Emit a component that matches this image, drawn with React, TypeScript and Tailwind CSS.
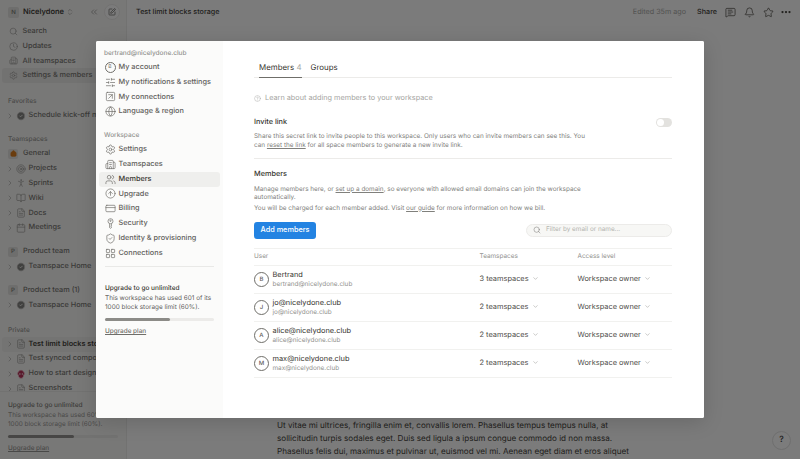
import {
  BookOpen,
  ChevronDown,
  ChevronRight,
  ChevronsLeft,
  ChevronsUpDown,
  CircleArrowUp,
  CircleHelp,
  Clock,
  CreditCard,
  FileText,
  Globe,
  Home,
  LayoutGrid,
  MessageSquareText,
  Bell,
  Star,
  Ellipsis,
  Search,
  Settings,
  SlidersHorizontal,
  SquareArrowUpRight,
  SquarePen,
  ShieldCheck,
  Target,
  Users,
  Building2,
  Calendar,
  PersonStanding,
  Skull,
  CircleCheck,
} from "lucide-react";

const font = "font-['Inter',sans-serif] [text-rendering:geometricPrecision] antialiased";

const VerticalKey = ({ size, strokeWidth, className }: { size: number; strokeWidth: number; className: string }) => (
  <svg width={size} height={size} viewBox="0 0 24 24" fill="none" stroke="currentColor" strokeWidth={strokeWidth} className={className}>
    <circle cx="12" cy="7" r="5.5" />
    <circle cx="12" cy="6" r="1.5" />
    <path d="M10 12.5V21l2 1.5 2-1.5v-2l-1.5-1 1.5-1v-4.5" />
  </svg>
);

const topItems = [
  { label: "Search", icon: Search },
  { label: "Updates", icon: Clock },
  { label: "All teamspaces", icon: Building2 },
];

const teamspaceItems = [
  { label: "Projects", icon: Target },
  { label: "Sprints", icon: PersonStanding },
  { label: "Wiki", icon: BookOpen },
  { label: "Docs", icon: FileText },
  { label: "Meetings", icon: Calendar },
];

const accountItems = [
  { label: "My notifications & settings", icon: SlidersHorizontal },
  { label: "My connections", icon: SquareArrowUpRight },
  { label: "Language & region", icon: Globe },
];

const workspaceItems = [
  { label: "Settings", icon: Settings },
  { label: "Teamspaces", icon: Building2 },
  { label: "Members", icon: Users, active: true },
  { label: "Upgrade", icon: CircleArrowUp },
  { label: "Billing", icon: CreditCard },
  { label: "Security", icon: VerticalKey },
  { label: "Identity & provisioning", icon: ShieldCheck },
  { label: "Connections", icon: LayoutGrid },
];

const members = [
  { initial: "B", name: "Bertrand", email: "bertrand@nicelydone.club", teamspaces: "3 teamspaces" },
  { initial: "J", name: "jo@nicelydone.club", email: "jo@nicelydone.club", teamspaces: "2 teamspaces" },
  { initial: "A", name: "alice@nicelydone.club", email: "alice@nicelydone.club", teamspaces: "2 teamspaces" },
  { initial: "M", name: "max@nicelydone.club", email: "max@nicelydone.club", teamspaces: "2 teamspaces" },
];

const SideLabel = ({ children, className }: { children: string; className: string }) => (
  <div className={`px-2 text-[6.5px] leading-[10px] font-medium text-[#91918e] ${className}`}>{children}</div>
);

const TreeRow = ({ icon: Icon, label, bold }: { icon: typeof Home; label: string; bold?: boolean }) => (
  <div className={`flex h-[14.8px] items-center whitespace-nowrap ${bold ? "mx-[2px] rounded-[3px] bg-[#efefed] pl-[4px]" : "pl-[6px]"}`}>
    <ChevronRight size={8} className="mr-[1.5px] shrink-0 text-[#a5a5a2]" />
    <Icon size={10} strokeWidth={1.5} className="mr-[3px] shrink-0 text-[#8f8f8c]" />
    <span className={`text-[7.3px] ${bold ? "font-semibold text-[#37352f]" : "font-medium text-[#6f6e69]"}`}>{label}</span>
  </div>
);

const HomeRow = ({ label }: { label: string }) => (
  <div className="flex h-[14.8px] items-center pl-[6px] whitespace-nowrap">
    <ChevronRight size={8} className="mr-[1.5px] shrink-0 text-[#a5a5a2]" />
    <CircleCheck size={10} fill="#7d7d7a" strokeWidth={2} className="mr-[3px] shrink-0 text-[#f9f8f6]" />
    <span className="text-[7.3px] font-medium text-[#6f6e69]">{label}</span>
  </div>
);

const TeamHeader = ({ label, className }: { label: string; className: string }) => (
  <div className={`flex h-[15px] items-center gap-[5px] pl-2 whitespace-nowrap ${className}`}>
    <span className="flex h-[10px] w-[10px] items-center justify-center rounded-[2px] bg-[#e3e2df] text-[6px] font-medium text-[#6f6e69]">P</span>
    <span className="text-[7.3px] font-medium text-[#6f6e69]">{label}</span>
  </div>
);

const UpgradeBlock = ({ dim }: { dim?: boolean }) => (
  <>
    <div className={`text-[6.5px] leading-[10px] font-medium ${dim ? "text-[#76756f]" : "text-[#37352f]"}`}>Upgrade to go unlimited</div>
    <div className={`mt-[1px] text-[6.4px] leading-[9px] ${dim ? "text-[#91918e]" : "text-[#5f5e5b]"}`}>
      <div className="whitespace-nowrap">This workspace has used 601 of its</div>
      <div className="whitespace-nowrap">1000 block storage limit (60%).</div>
    </div>
    <div className="mt-[6px] h-[3px] w-full rounded-full bg-[#ecebe9]">
      <div className="h-full w-[60%] rounded-full bg-[#8c8b87]" />
    </div>
    <div className={`mt-[5.5px] text-[6.4px] leading-[10px] font-medium underline ${dim ? "text-[#91918e]" : "text-[#6f6e69]"}`}>Upgrade plan</div>
  </>
);

const BackgroundPage = () => (
  <div className="flex h-full w-full">
    <aside className="flex h-full w-[127px] shrink-0 flex-col overflow-hidden border-r border-[#ecebe9] bg-[#f9f8f6]">
      <div className="flex h-[23px] shrink-0 items-center pl-2 pr-[6px] pt-[1px]">
        <span className="flex h-[11px] w-[11px] items-center justify-center rounded-[2px] bg-[#e3e2df] text-[6px] font-medium text-[#6f6e69]">N</span>
        <span className="ml-[4px] text-[7.5px] font-semibold text-[#37352f]">Nicelydone</span>
        <ChevronsUpDown size={8} className="ml-[2px] text-[#9a9a97]" />
        <ChevronsLeft size={10} className="ml-auto text-[#9a9a97]" />
        <span className="ml-[5px] flex h-[16px] w-[16px] items-center justify-center rounded-full border border-[#ecebe9] bg-white">
          <SquarePen size={8} className="text-[#4d4c48]" />
        </span>
      </div>
      <div className="mt-[1px]">
        {topItems.map((item) => (
          <div key={item.label} className="flex h-[14.8px] items-center gap-[5px] pl-[8.5px]">
            <item.icon size={9} strokeWidth={1.5} className="shrink-0 text-[#8f8f8c]" />
            <span className="text-[7.3px] font-medium text-[#6f6e69]">{item.label}</span>
          </div>
        ))}
        <div className="mx-[2px] flex h-[15px] items-center gap-[5px] rounded-[3px] bg-[#ecebe9] pl-[6.5px] whitespace-nowrap">
          <Settings size={9} strokeWidth={1.5} className="shrink-0 text-[#8f8f8c]" />
          <span className="text-[7.3px] font-medium text-[#6f6e69]">Settings &amp; members</span>
        </div>
      </div>
      <SideLabel className="mt-[13px]">Favorites</SideLabel>
      <div className="mt-[2px]">
        <HomeRow label="Schedule kick-off meeting" />
      </div>
      <SideLabel className="mt-[11px]">Teamspaces</SideLabel>
      <div className="mt-[2px] flex h-[15px] items-center gap-[5px] pl-2">
        <span className="flex h-[10px] w-[10px] items-center justify-center rounded-[2px] bg-[#e3e2df]">
          <Home size={7} fill="#d9730d" className="text-[#d9730d]" />
        </span>
        <span className="text-[7.3px] font-medium text-[#6f6e69]">General</span>
      </div>
      {teamspaceItems.map((item) => (
        <TreeRow key={item.label} icon={item.icon} label={item.label} />
      ))}
      <TeamHeader label="Product team" className="mt-[9px]" />
      <HomeRow label="Teamspace Home" />
      <TeamHeader label="Product team (1)" className="mt-[9px]" />
      <HomeRow label="Teamspace Home" />
      <SideLabel className="mt-[12px]">Private</SideLabel>
      <div className="mt-[2px]">
        <TreeRow icon={FileText} label="Test limit blocks storage" bold />
        <TreeRow icon={FileText} label="Test synced components" />
        <div className="flex h-[14.8px] items-center pl-[6px] whitespace-nowrap">
          <ChevronRight size={8} className="mr-[1.5px] shrink-0 text-[#a5a5a2]" />
          <Skull size={10} fill="#b5244f" strokeWidth={1.5} className="mr-[3px] shrink-0 text-[#f4d7de]" />
          <span className="text-[7.3px] font-medium text-[#6f6e69]">How to start designing</span>
        </div>
        <TreeRow icon={FileText} label="Screenshots" />
      </div>
      <div className="relative mt-[-5px] min-h-0 flex-1 border-t border-[#ecebe9] bg-[#f9f8f6] px-2 pt-[8px]">
        <UpgradeBlock dim />
      </div>
    </aside>
    <main className="relative flex min-w-0 flex-1 flex-col bg-white">
      <header className="flex h-[23px] shrink-0 items-center pl-[9px] pr-[8px] pt-[1px]">
        <span className="text-[7.2px] font-medium text-[#37352f]">Test limit blocks storage</span>
        <span className="ml-auto text-[7.2px] text-[#a5a5a2]">Edited 35m ago</span>
        <span className="ml-[11px] text-[7.2px] font-medium text-[#37352f]">Share</span>
        <MessageSquareText size={11} strokeWidth={1.5} className="ml-[7.5px] text-[#37352f]" />
        <Bell size={11} strokeWidth={1.5} className="ml-[8px] text-[#37352f]" />
        <Star size={11} strokeWidth={1.5} className="ml-[8px] text-[#37352f]" />
        <Ellipsis size={12} strokeWidth={2.5} className="ml-[6.5px] text-[#37352f]" />
      </header>
      <div className="mt-[396px] pl-[150px] text-[8.1px] leading-[12.9px] whitespace-nowrap text-[#37352f]">
        <div>Ut vitae mi ultrices, fringilla enim et, convallis lorem. Phasellus tempus tempus nulla, at</div>
        <div>sollicitudin turpis sodales eget. Duis sed ligula a ipsum congue commodo id non massa.</div>
        <div>Phasellus felis dui, maximus et pulvinar ut, euismod vel mi. Aenean eget diam et eros aliquet</div>
      </div>
    </main>
  </div>
);

const ModalSidebar = () => (
  <aside className="w-[127px] shrink-0 bg-[#fbfbfa] px-[3px] pt-[6px]">
    <div className="px-[5px] pt-[1px] text-[6.5px] leading-[10px] font-medium whitespace-nowrap text-[#91918e]">bertrand@nicelydone.club</div>
    <div className="mt-[2px] flex h-[14.8px] items-center gap-[3px] px-[5.5px]">
      <span className="flex h-[11px] w-[11px] shrink-0 items-center justify-center rounded-full border border-[#6f6e69] text-[5px] text-[#6f6e69]">B</span>
      <span className="text-[7.3px] font-medium text-[#5f5e5b]">My account</span>
    </div>
    {accountItems.map((item) => (
      <div key={item.label} className="flex h-[14.8px] items-center gap-[3px] px-[5.5px] whitespace-nowrap">
        <item.icon size={11} strokeWidth={1.5} className="shrink-0 text-[#6f6e69]" />
        <span className="text-[7.3px] font-medium text-[#5f5e5b]">{item.label}</span>
      </div>
    ))}
    <div className="mt-[11px] px-[5px] text-[6.5px] leading-[10px] font-medium text-[#91918e]">Workspace</div>
    <div className="mt-[2px]">
      {workspaceItems.map((item) => (
        <div
          key={item.label}
          className={`flex h-[14.8px] items-center gap-[3px] rounded-[3px] px-[5.5px] whitespace-nowrap ${item.active ? "bg-[#efefed]" : ""}`}
        >
          <item.icon size={11} strokeWidth={1.5} className="shrink-0 text-[#6f6e69]" />
          <span className={`text-[7.3px] font-medium ${item.active ? "text-[#37352f]" : "text-[#5f5e5b]"}`}>{item.label}</span>
        </div>
      ))}
    </div>
    <div className="mx-[6px] mt-[5px] border-t border-[#e9e9e7]" />
    <div className="mx-[6px] mt-[16px]">
      <UpgradeBlock />
    </div>
  </aside>
);

const MembersTable = () => (
  <div className="mt-[9px] border-t border-[#f1f1ef] text-[7.4px]">
    <div className="grid h-[17px] grid-cols-[225.5px_98px_1fr] items-center border-b border-[#f1f1ef] text-[6.4px] text-[#91918e]">
      <span>User</span>
      <span>Teamspaces</span>
      <span>Access level</span>
    </div>
    {members.map((member) => (
      <div key={member.email} className="grid h-[28px] grid-cols-[225.5px_98px_1fr] items-center border-b border-[#f1f1ef]">
        <div className="flex items-center gap-[3.5px]">
          <span className="flex h-[15px] w-[15px] shrink-0 items-center justify-center rounded-full border border-[#6f6e69] text-[6px] font-medium text-[#5f5e5b]">
            {member.initial}
          </span>
          <div>
            <div className="text-[7.4px] leading-[11px] text-[#37352f]">{member.name}</div>
            <div className="mt-[-1px] text-[6.4px] leading-[10px] text-[#91918e]">{member.email}</div>
          </div>
        </div>
        <div className="flex items-center gap-[3px] text-[#4d4c48]">
          {member.teamspaces}
          <ChevronDown size={7} className="text-[#a5a5a2]" />
        </div>
        <div className="flex items-center gap-[3px] text-[#4d4c48]">
          Workspace owner
          <ChevronDown size={7} className="text-[#a5a5a2]" />
        </div>
      </div>
    ))}
  </div>
);

const ModalMain = () => (
  <section className="min-w-0 flex-1 bg-white pl-[31px] pr-[32px] pt-[20px]">
    <div className="flex h-[17px] items-start gap-[9px] border-b border-[#ecebe9] pl-[5px] text-[7.9px] leading-[12px]">
      <div className="h-[17px] border-b-[1.5px] border-[#6f6e69] text-[#37352f]">
        Members <span className="text-[#a5a5a2]">4</span>
      </div>
      <div className="text-[#37352f]">Groups</div>
    </div>
    <div className="mt-[13.5px] flex h-[13px] items-center gap-[4px] text-[7.3px] text-[#a5a5a2]">
      <CircleHelp size={7} strokeWidth={1.5} />
      Learn about adding members to your workspace
    </div>
    <div className="mt-[12px] flex h-[12px] items-center justify-between">
      <span className="text-[7.3px] font-medium text-[#37352f]">Invite link</span>
      <span className="flex h-[9px] w-[16px] items-center rounded-full bg-[#e3e2df] pl-[1px]">
        <span className="h-[7px] w-[7px] rounded-full bg-white" />
      </span>
    </div>
    <p className="mt-[3.5px] w-[335px] text-[6.4px] leading-[8.5px] text-[#80807c]">
      Share this secret link to invite people to this workspace. Only users who can invite members can see this. You can{" "}
      <span className="underline">reset the link</span> for all space members to generate a new invite link.
    </p>
    <div className="mt-[8.5px] border-t border-[#ecebe9]" />
    <div className="mt-[10.5px] h-[12px] text-[7.3px] font-medium text-[#37352f]">Members</div>
    <p className="mt-[3.5px] w-[335px] text-[6.4px] leading-[8.5px] text-[#80807c]">
      Manage members here, or <span className="underline">set up a domain</span>, so everyone with allowed email domains can join the workspace automatically.
    </p>
    <p className="mt-[2px] text-[6.4px] leading-[9px] whitespace-nowrap text-[#80807c]">
      You will be charged for each member added. Visit <span className="underline">our guide</span> for more information on how we bill.
    </p>
    <div className="mt-[9px] flex items-center justify-between">
      <button className="flex h-[17px] w-[62px] items-center justify-center rounded-[3px] bg-[#2383e2] text-[7.3px] font-medium text-white">Add members</button>
      <div className="flex h-[13px] w-[146px] items-center gap-[5px] rounded-full border border-[#ecebe9] bg-[#f7f7f5] pl-[6px] text-[6.4px] text-[#b4b4b0]">
        <Search size={8} strokeWidth={1.5} className="text-[#787774]" />
        Filter by email or name...
      </div>
    </div>
    <MembersTable />
  </section>
);

const App = () => (
  <div className={`relative h-[459px] w-[800px] overflow-hidden ${font}`}>
    <BackgroundPage />
    <div className="absolute inset-0 bg-[#0f0f0f]/55" />
    <div className="absolute top-[41px] left-[96px] flex h-[377px] w-[608px] overflow-hidden rounded-[2px] bg-white shadow-[0_4px_20px_rgba(0,0,0,0.15)]">
      <ModalSidebar />
      <ModalMain />
    </div>
    <div className="absolute right-[9px] bottom-[9px] flex h-[19px] w-[19px] items-center justify-center rounded-full border border-[#6f6f6f] bg-[#7c7c7c] text-[8.5px] font-medium text-[#1b1b1b]">
      ?
    </div>
  </div>
);

export default App;
